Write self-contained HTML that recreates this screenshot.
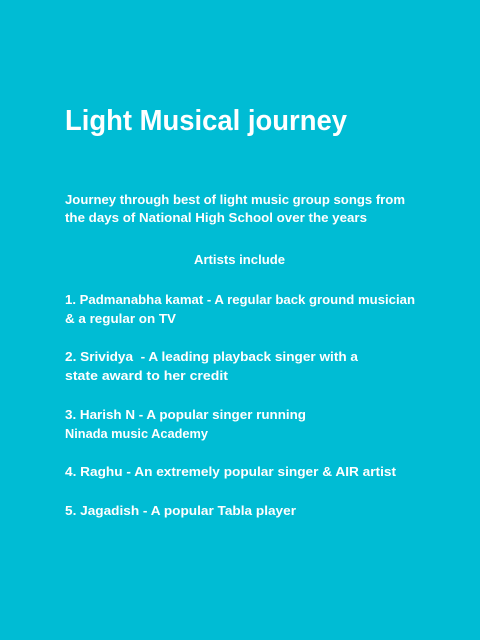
<!DOCTYPE html>
<html><head><meta charset="utf-8">
<style>
html,body{margin:0;padding:0}
body{width:480px;height:640px;background:#00bcd4;position:relative;overflow:hidden;font-family:"Liberation Sans",sans-serif;color:#fff;font-weight:bold}
.l{position:absolute;white-space:pre;transform-origin:0 0;font-size:13px;line-height:16px}
.t{font-size:29px;line-height:34px}
</style></head><body>
<div class="l t" data-x="65" data-y="104" data-w="282">Light Musical journey</div>
<div class="l" data-x="65" data-y="192" data-w="340">Journey through best of light music group songs from</div>
<div class="l" data-x="65" data-y="210" data-w="302">the days of National High School over the years</div>
<div class="l" data-x="194" data-y="252" data-w="91">Artists include</div>
<div class="l" data-x="65" data-y="292" data-w="350">1. Padmanabha kamat - A regular back ground musician</div>
<div class="l" data-x="65" data-y="311" data-w="111">&amp; a regular on TV</div>
<div class="l" data-x="65" data-y="349" data-w="293">2. Srividya  - A leading playback singer with a</div>
<div class="l" data-x="65" data-y="368" data-w="163">state award to her credit</div>
<div class="l" data-x="65" data-y="407" data-w="241">3. Harish N - A popular singer running</div>
<div class="l" data-x="65" data-y="426" data-w="143">Ninada music Academy</div>
<div class="l" data-x="65" data-y="464" data-w="331">4. Raghu - An extremely popular singer &amp; AIR artist</div>
<div class="l" data-x="65" data-y="503" data-w="231">5. Jagadish - A popular Tabla player</div>
<script>
document.querySelectorAll('.l').forEach(function(e){
e.style.left=e.dataset.x+'px';e.style.top=e.dataset.y+'px';
var w=e.getBoundingClientRect().width;
e.style.transform='scaleX('+(e.dataset.w/w)+')';
});
</script>
</body></html>
